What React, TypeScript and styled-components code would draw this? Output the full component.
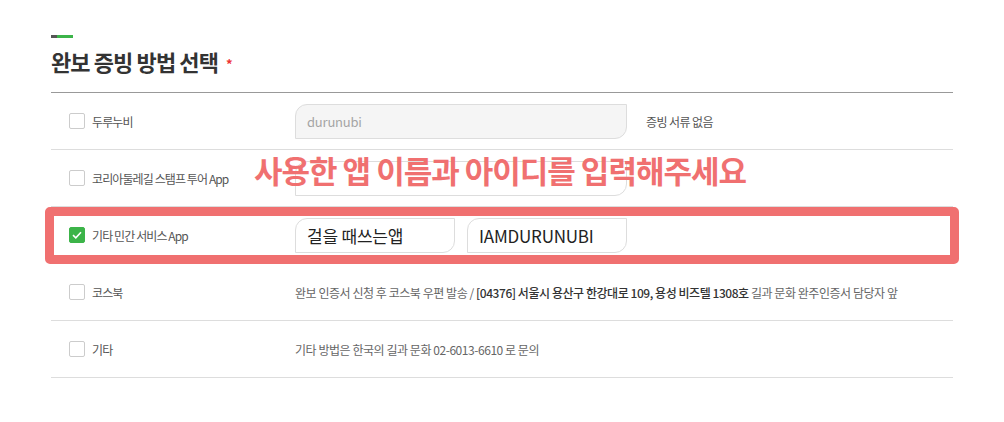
import React from 'react'
import styled, { createGlobalStyle } from 'styled-components'

const GlobalStyle = createGlobalStyle`
  html, body { margin: 0; padding: 0; background: #fff; }
  body {
    font-family: "Noto Sans CJK KR", "Noto Sans", sans-serif;
    color: #333;
  }
`

const Page = styled.div`
  position: relative;
  width: 1004px;
  height: 422px;
  padding: 35px 51px 0;
  box-sizing: border-box;
`

const TitleBar = styled.div`
  width: 22px;
  height: 3px;
  background: linear-gradient(to right, #555 0 6px, #3cb449 6px 100%);
`

const Title = styled.h2`
  margin: 7px 0 12px;
  font-size: 22px;
  line-height: 32px;
  font-weight: 700;
  color: #333;
  letter-spacing: -0.9px;
  em {
    font-style: normal;
    color: #e33;
    font-size: 13px;
    margin-left: 8px;
    vertical-align: 2px;
  }
`

const List = styled.ul`
  list-style: none;
  margin: 0;
  padding: 0;
  border-top: 1px solid #999;
`

const Row = styled.li`
  display: grid;
  grid-template-columns: 244px 1fr;
  align-items: center;
  height: 56px;
  border-bottom: 1px solid #ddd;
`

const Choice = styled.label`
  display: flex;
  align-items: center;
  gap: 7px;
  padding-left: 18px;
  font-size: 12px;
  color: #555;
  letter-spacing: -0.9px;
`

const Box = styled.span<{ $checked?: boolean }>`
  width: 16px;
  height: 16px;
  box-sizing: border-box;
  border: 1px solid ${p => (p.$checked ? '#3cb449' : '#ccc')};
  background: ${p => (p.$checked ? '#3cb449' : '#fff')};
  border-radius: 2px;
  display: flex;
  align-items: center;
  justify-content: center;
`

const Field = styled.div`
  display: flex;
  align-items: center;
  gap: 12px;
`

const Input = styled.div<{ $width: number; $disabled?: boolean; $large?: boolean }>`
  width: ${p => p.$width}px;
  height: 35px;
  box-sizing: border-box;
  border: 1px solid #ddd;
  border-radius: 12px 0 12px 0;
  background: ${p => (p.$disabled ? '#f5f5f5' : '#fff')};
  padding: 0 10px 0 11px;
  display: flex;
  align-items: center;
  font-size: ${p => (p.$large ? '17px' : '13px')};
  color: ${p => (p.$disabled ? '#a5a5a5' : '#222')};
  letter-spacing: ${p => (p.$large ? '-0.2px' : '-0.2px')};
`

const Note = styled.span`
  margin-left: 7px;
  font-size: 12px;
  color: #555;
  letter-spacing: -0.6px;
`

const Desc = styled.p`
  margin: 0;
  font-size: 12px;
  color: #666;
  letter-spacing: -0.45px;
  strong {
    font-weight: 500;
    color: #333;
  }
`

const Highlight = styled.div`
  position: absolute;
  left: 45px;
  top: 207px;
  width: 914px;
  height: 57px;
  box-sizing: border-box;
  border: 9px solid #f07070;
  border-radius: 5px;
  pointer-events: none;
`

const Callout = styled.div`
  position: absolute;
  left: 254px;
  top: 146px;
  font-size: 31px;
  line-height: 48px;
  font-weight: 700;
  color: #f07070;
  letter-spacing: -1px;
  white-space: nowrap;
`

const Check = () => (
  <svg width="10" height="8" viewBox="0 0 10 8">
    <path d="M1 4.2 L3.8 6.8 L9 1.2" fill="none" stroke="#fff" strokeWidth="1.6" />
  </svg>
)

export default function App() {
  return (
    <>
      <GlobalStyle />
      <Page>
        <TitleBar />
        <Title>
          완보 증빙 방법 선택<em>*</em>
        </Title>
        <List>
          <Row>
            <Choice><Box />두루누비</Choice>
            <Field>
              <Input $width={332} $disabled>durunubi</Input>
              <Note>증빙 서류 없음</Note>
            </Field>
          </Row>
          <Row>
            <Choice><Box />코리아둘레길 스탬프 투어 App</Choice>
            <Field>
              <Input $width={332} />
            </Field>
          </Row>
          <Row>
            <Choice><Box $checked><Check /></Box>기타 민간 서비스 App</Choice>
            <Field>
              <Input $width={160} $large>걸을 때쓰는앱</Input>
              <Input $width={160} $large>IAMDURUNUBI</Input>
            </Field>
          </Row>
          <Row>
            <Choice><Box />코스북</Choice>
            <Desc>
              완보 인증서 신청 후 코스북 우편 발송 / <strong>[04376] 서울시 용산구 한강대로 109, 용성 비즈텔 1308호</strong> 길과 문화 완주인증서 담당자 앞
            </Desc>
          </Row>
          <Row>
            <Choice><Box />기타</Choice>
            <Desc>기타 방법은 한국의 길과 문화 02-6013-6610 로 문의</Desc>
          </Row>
        </List>
        <Highlight />
        <Callout>사용한 앱 이름과 아이디를 입력해주세요</Callout>
      </Page>
    </>
  )
}
